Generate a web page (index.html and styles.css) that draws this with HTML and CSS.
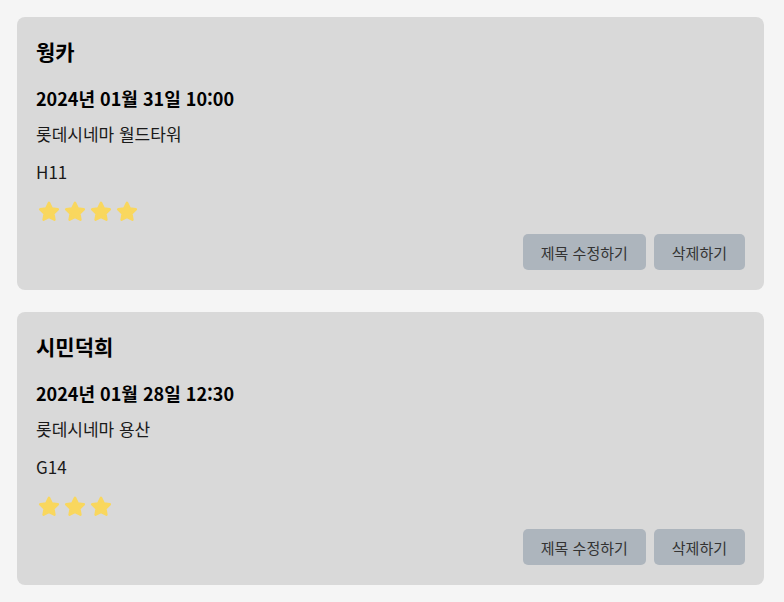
FILE: index.html
```html
<!DOCTYPE html>
<html lang="ko">
<head>
    <meta charset="UTF-8">
    <meta name="viewport" content="width=device-width, initial-scale=1.0">
    <title>관람 기록</title>
    <link rel="stylesheet" href="styles.css">
</head>
<body>
    <div class="list">
        <div class="card">
            <h3 class="title">웡카</h3>
            <p class="date">2024년 01월 31일 10:00</p>
            <p class="info">롯데시네마 월드타워</p>
            <p class="info seat">H11</p>
            <div class="stars">
                <svg class="star" viewBox="0 0 24 24"><path d="M12 2.8l2.7 5.6 6.1.9-4.4 4.3 1 6.1L12 16.8l-5.4 2.9 1-6.1-4.4-4.3 6.1-.9z"/></svg>
                <svg class="star" viewBox="0 0 24 24"><path d="M12 2.8l2.7 5.6 6.1.9-4.4 4.3 1 6.1L12 16.8l-5.4 2.9 1-6.1-4.4-4.3 6.1-.9z"/></svg>
                <svg class="star" viewBox="0 0 24 24"><path d="M12 2.8l2.7 5.6 6.1.9-4.4 4.3 1 6.1L12 16.8l-5.4 2.9 1-6.1-4.4-4.3 6.1-.9z"/></svg>
                <svg class="star" viewBox="0 0 24 24"><path d="M12 2.8l2.7 5.6 6.1.9-4.4 4.3 1 6.1L12 16.8l-5.4 2.9 1-6.1-4.4-4.3 6.1-.9z"/></svg>
            </div>
            <div class="actions">
                <button class="btn edit">제목 수정하기</button>
                <button class="btn delete">삭제하기</button>
            </div>
        </div>
        <div class="card">
            <h3 class="title">시민덕희</h3>
            <p class="date">2024년 01월 28일 12:30</p>
            <p class="info">롯데시네마 용산</p>
            <p class="info seat">G14</p>
            <div class="stars">
                <svg class="star" viewBox="0 0 24 24"><path d="M12 2.8l2.7 5.6 6.1.9-4.4 4.3 1 6.1L12 16.8l-5.4 2.9 1-6.1-4.4-4.3 6.1-.9z"/></svg>
                <svg class="star" viewBox="0 0 24 24"><path d="M12 2.8l2.7 5.6 6.1.9-4.4 4.3 1 6.1L12 16.8l-5.4 2.9 1-6.1-4.4-4.3 6.1-.9z"/></svg>
                <svg class="star" viewBox="0 0 24 24"><path d="M12 2.8l2.7 5.6 6.1.9-4.4 4.3 1 6.1L12 16.8l-5.4 2.9 1-6.1-4.4-4.3 6.1-.9z"/></svg>
            </div>
            <div class="actions">
                <button class="btn edit">제목 수정하기</button>
                <button class="btn delete">삭제하기</button>
            </div>
        </div>
    </div>
</body>
</html>
```

FILE: styles.css
```css
body {
    font-family: "Noto Sans CJK KR", "Noto Sans", sans-serif;
    background-color: #f5f5f5;
    margin: 0;
    padding: 17px 20px 17px 17px;
    color: #111;
}
.list {
    display: flex;
    flex-direction: column;
    gap: 22px;
}
.card {
    background-color: #d9d9d9;
    border-radius: 8px;
    padding: 20px 19px 20px 19px;
    display: flex;
    flex-direction: column;
}
.title {
    font-size: 21px;
    font-weight: bold;
    line-height: 28px;
    margin: 0;
    color: #000;
}
.date {
    font-size: 18px;
    font-weight: bold;
    line-height: 26px;
    margin: 20px 0 0;
    color: #000;
}
.info {
    font-size: 17px;
    line-height: 24px;
    margin: 11px 0 0;
    color: #1a1a1a;
}
.seat {
    margin-top: 14px;
}
.stars {
    display: flex;
    gap: 2px;
    margin-top: 16px;
    padding-left: 1px;
}
.star {
    width: 24px;
    height: 24px;
    fill: #f9d75e;
    stroke: #f9d75e;
    stroke-width: 2.5;
    stroke-linejoin: round;
}
.actions {
    display: flex;
    justify-content: flex-end;
    gap: 8px;
    margin-top: 10px;
}
.btn {
    font-family: inherit;
    font-size: 15px;
    color: #333;
    background-color: #adb5bd;
    border: none;
    border-radius: 5px;
    height: 36px;
    padding: 0 18px;
    cursor: pointer;
}
.btn:hover {
    background-color: #9aa3ac;
}
```
